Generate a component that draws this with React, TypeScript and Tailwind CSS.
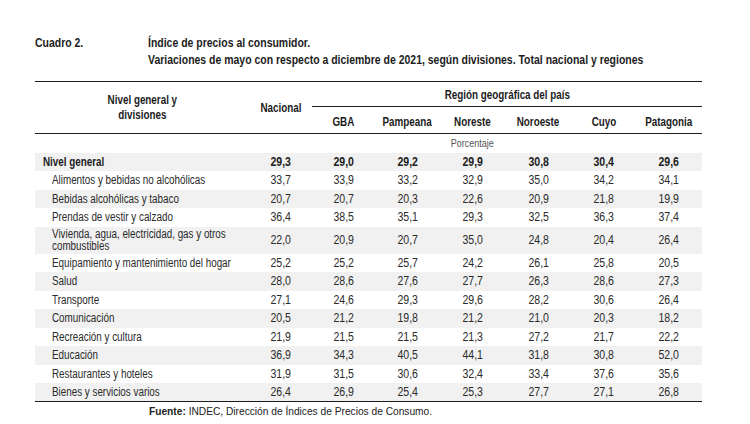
import React from 'react';

const regiones = ['GBA', 'Pampeana', 'Noreste', 'Noroeste', 'Cuyo', 'Patagonia'];

const filas: { label: string[]; v: string[] }[] = [
  { label: ['Alimentos y bebidas no alcohólicas'], v: ['33,7', '33,9', '33,2', '32,9', '35,0', '34,2', '34,1'] },
  { label: ['Bebidas alcohólicas y tabaco'], v: ['20,7', '20,7', '20,3', '22,6', '20,9', '21,8', '19,9'] },
  { label: ['Prendas de vestir y calzado'], v: ['36,4', '38,5', '35,1', '29,3', '32,5', '36,3', '37,4'] },
  { label: ['Vivienda, agua, electricidad, gas y otros', 'combustibles'], v: ['22,0', '20,9', '20,7', '35,0', '24,8', '20,4', '26,4'] },
  { label: ['Equipamiento y mantenimiento del hogar'], v: ['25,2', '25,2', '25,7', '24,2', '26,1', '25,8', '20,5'] },
  { label: ['Salud'], v: ['28,0', '28,6', '27,6', '27,7', '26,3', '28,6', '27,3'] },
  { label: ['Transporte'], v: ['27,1', '24,6', '29,3', '29,6', '28,2', '30,6', '26,4'] },
  { label: ['Comunicación'], v: ['20,5', '21,2', '19,8', '21,2', '21,0', '20,3', '18,2'] },
  { label: ['Recreación y cultura'], v: ['21,9', '21,5', '21,5', '21,3', '27,2', '21,7', '22,2'] },
  { label: ['Educación'], v: ['36,9', '34,3', '40,5', '44,1', '31,8', '30,8', '52,0'] },
  { label: ['Restaurantes y hoteles'], v: ['31,9', '31,5', '30,6', '32,4', '33,4', '37,6', '35,6'] },
  { label: ['Bienes y servicios varios'], v: ['26,4', '26,9', '25,4', '25,3', '27,7', '27,1', '26,8'] },
];

const total = ['29,3', '29,0', '29,2', '29,9', '30,8', '30,4', '29,6'];

const anchos = ['w-[62px]', 'w-[63px]', 'w-[65px]', 'w-[65px]', 'w-[67px]', 'w-[63px]', 'w-[67px]'];

// condensed look: Liberation Sans squeezed horizontally
const Narrow = ({ children, left }: { children: React.ReactNode; left?: boolean }) => (
  <span className={`inline-block scale-x-[0.82] ${left ? 'origin-left' : 'origin-center'}`}>{children}</span>
);

const Num = ({ children }: { children: React.ReactNode }) => (
  <span className="inline-block scale-x-[0.88] origin-center">{children}</span>
);

const Titulo = ({ children }: { children: React.ReactNode }) => (
  <span className="inline-block scale-x-[0.805] origin-left">{children}</span>
);

const App: React.FC = () => {
  return (
    <div className="w-[750px] h-[424px] bg-white text-[#1c1c1c] font-['Liberation_Sans',Arial,sans-serif] overflow-hidden">
      <div className="flex pt-[34px] pl-[35px] text-[13px] font-bold leading-[17px] whitespace-nowrap">
        <div className="w-[113px] shrink-0">
          <Titulo>Cuadro 2.</Titulo>
        </div>
        <div>
          <div>
            <Titulo>Índice de precios al consumidor.</Titulo>
          </div>
          <div>
            <Titulo>Variaciones de mayo con respecto a diciembre de 2021, según divisiones. Total nacional y regiones</Titulo>
          </div>
        </div>
      </div>

      <table className="ml-[35px] mt-[13px] w-[667px] table-fixed border-collapse text-[12px] whitespace-nowrap">
        <colgroup>
          <col className="w-[215px]" />
          {anchos.map((a, i) => (
            <col key={i} className={a} />
          ))}
        </colgroup>
        <thead className="font-bold">
          <tr className="h-[25px] border-t-[1.5px] border-[#1c1c1c]">
            <th rowSpan={2} className="text-center leading-[15px] font-bold border-b-[1.5px] border-[#1c1c1c]">
              <Narrow>
                Nivel general y<br />divisiones
              </Narrow>
            </th>
            <th rowSpan={2} className="text-center font-bold border-b-[1.5px] border-[#1c1c1c]">
              <Narrow>Nacional</Narrow>
            </th>
            <th colSpan={6} className="text-center font-bold border-b border-[#1c1c1c] pt-[1px]">
              <Narrow>Región geográfica del país</Narrow>
            </th>
          </tr>
          <tr className="h-[27px]">
            {regiones.map((r) => (
              <th key={r} className="text-center font-bold pt-[4px] border-b-[1.5px] border-[#1c1c1c]">
                <Narrow>{r}</Narrow>
              </th>
            ))}
          </tr>
        </thead>
        <tbody>
          <tr className="h-[19px]">
            <td />
            <td />
            <td />
            <td />
            <td className="text-center text-[#555] text-[11px]">
              <Narrow>Porcentaje</Narrow>
            </td>
            <td />
            <td />
            <td />
          </tr>
          <tr className="h-[18.5px] bg-[#f1f1f1] font-bold">
            <td className="pl-[8px]">
              <Narrow left>Nivel general</Narrow>
            </td>
            {total.map((x, i) => (
              <td key={i} className="text-center">
                <Num>{x}</Num>
              </td>
            ))}
          </tr>
          {filas.map((f, idx) => (
            <tr
              key={f.label[0]}
              className={`${f.label.length > 1 ? 'h-[27px]' : 'h-[18.5px]'} ${idx % 2 === 1 ? 'bg-[#f1f1f1]' : 'bg-white'} ${
                idx === filas.length - 1 ? 'border-b-[1.5px] border-[#1c1c1c]' : ''
              } text-[#2a2a2a]`}
            >
              <td className="pl-[17px] leading-[12.5px]">
                <Narrow left>
                  {f.label.map((l) => (
                    <span key={l} className="block">
                      {l}
                    </span>
                  ))}
                </Narrow>
              </td>
              {f.v.map((x, i) => (
                <td key={i} className="text-center">
                  <Num>{x}</Num>
                </td>
              ))}
            </tr>
          ))}
        </tbody>
      </table>

      <div className="pl-[149px] pt-[2px] text-[10.2px] text-[#222]">
        <span className="font-bold">Fuente:</span> INDEC, Dirección de Índices de Precios de Consumo.
      </div>
    </div>
  );
};

export default App;
